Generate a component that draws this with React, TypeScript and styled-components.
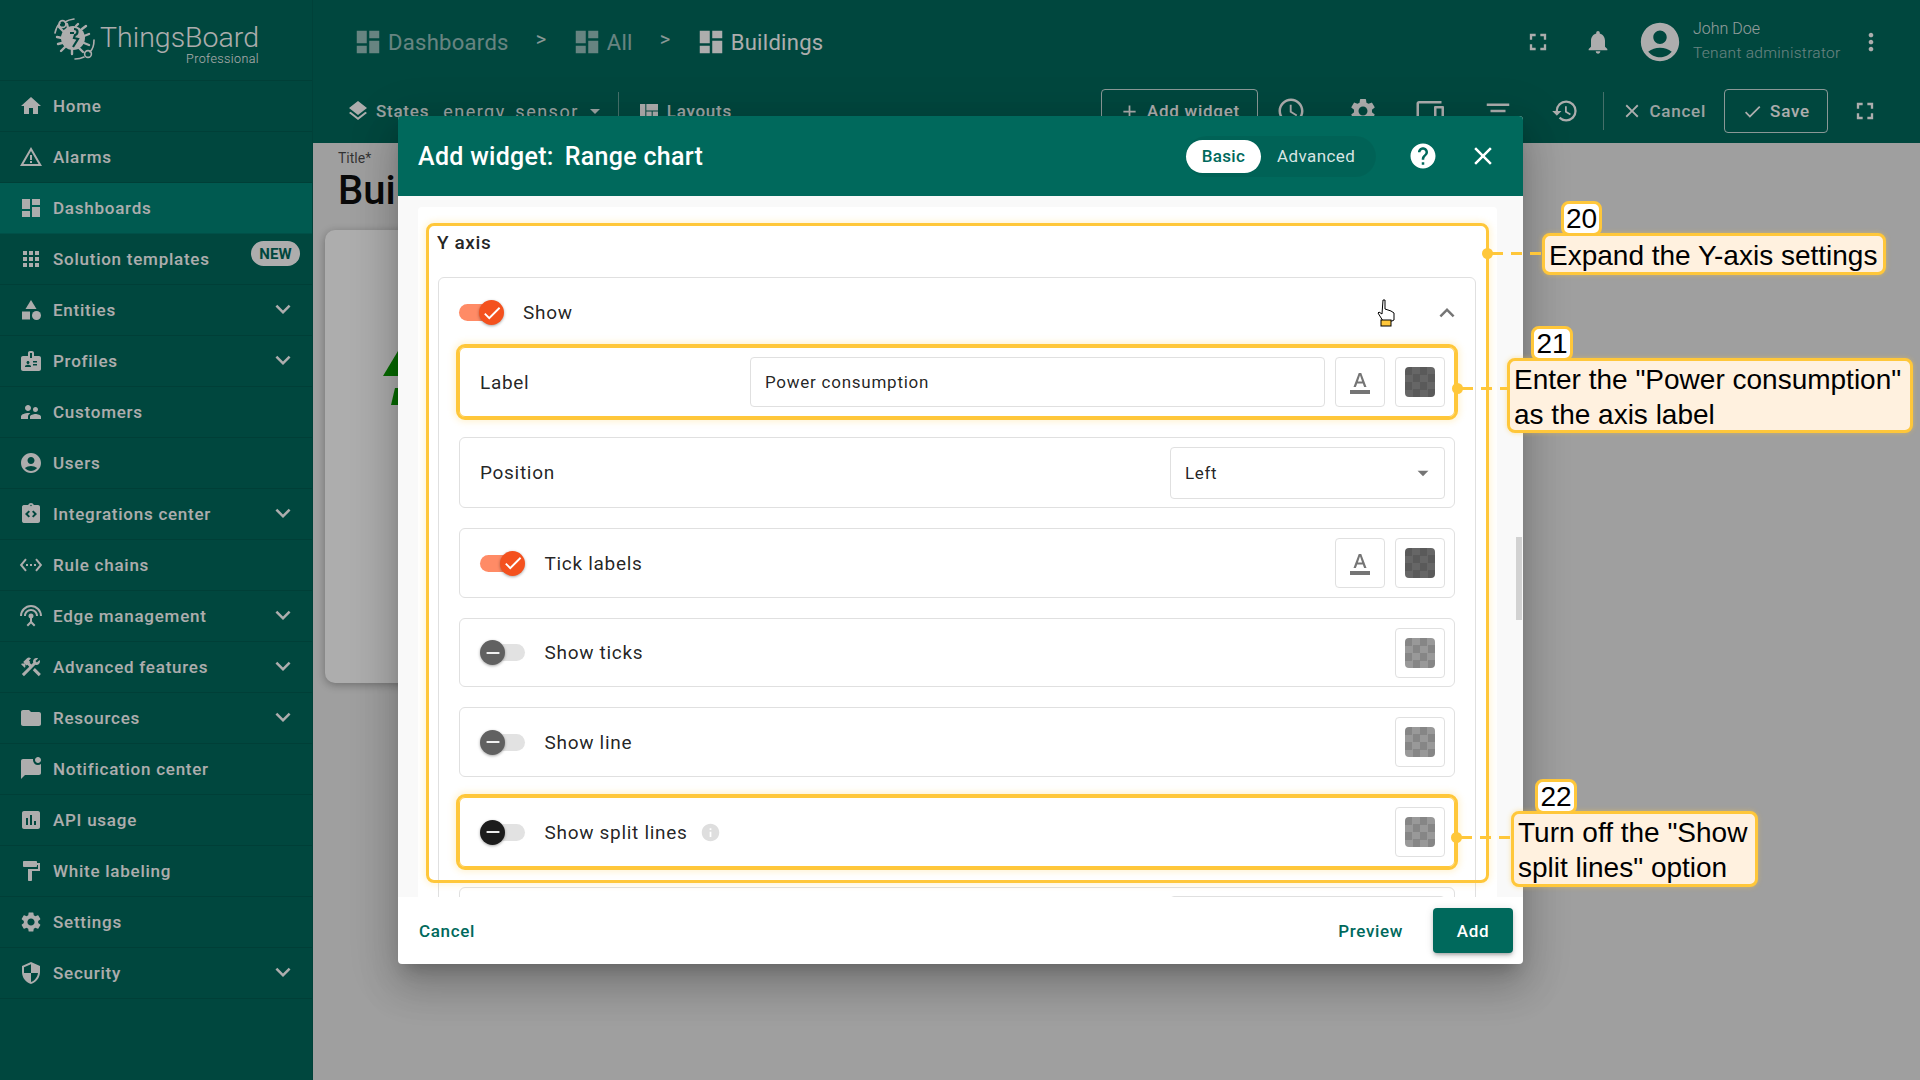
import React from 'react';
import styled, { createGlobalStyle } from 'styled-components';
import {
  MdHome, MdWarningAmber, MdDashboard, MdApps, MdCategory, MdBadge, MdSupervisorAccount, MdAccountCircle,
  MdIntegrationInstructions, MdSettingsEthernet, MdSettingsInputAntenna, MdConstruction, MdFolder,
  MdMarkChatUnread, MdAssessment, MdFormatPaint, MdSettings, MdSecurity, MdExpandMore, MdExpandLess,
  MdLayers, MdFullscreen, MdNotifications, MdMoreVert, MdAdd, MdHistory, MdAccessTime, MdDevices,
  MdFilterList, MdClose, MdCheck, MdHelp, MdInfo, MdArrowDropDown, MdFormatColorText, MdRemove, MdViewQuilt,
} from 'react-icons/md';

const Global = createGlobalStyle`
  html, body { margin: 0; padding: 0; width: 1920px; height: 1080px; overflow: hidden; }
  body { font-family: Roboto, "Liberation Sans", sans-serif; background: #eaeaea; }
  * { box-sizing: border-box; }
`;

const Page = styled.div`
  position: relative; width: 1920px; height: 1080px; display: flex; overflow: hidden;
`;
const Sidebar = styled.aside`
  width: 313px; height: 1080px; flex: none; background: #00695c; color: #fff;
  border-right: 1px solid rgba(0,0,0,.08);
`;
const Brand = styled.div`
  height: 81px; display: flex; padding: 17px 0 0 53px; gap: 5px; border-bottom: 1px solid rgba(0,0,0,.1);
`;
const BrandText = styled.div`display: flex; flex-direction: column; align-items: flex-end; width: 157px; padding-top: 6px;`;
const BrandName = styled.div`font-size: 28.5px; font-weight: 300; line-height: 29px;`;
const BrandSub = styled.div`font-size: 12.5px; font-weight: 300; line-height: 14px; letter-spacing: .4px;`;
const NavItem = styled.div<{ $active?: boolean }>`
  position: relative; height: 51px; display: flex; align-items: center; padding-left: 19px;
  background: ${p => (p.$active ? '#008577' : 'transparent')};
  border-bottom: 1px solid rgba(0,0,0,.1);
  font-size: 17px; font-weight: 500; letter-spacing: .75px;
  svg.main { width: 24px; height: 24px; margin-right: 10px; flex: none; }
`;
const Chevron = styled(MdExpandMore)`
  position: absolute; right: 14px; top: 9px; width: 30px; height: 30px;
`;
const NewBadge = styled.span`
  position: absolute; left: 251px; top: 7px; width: 49px; height: 25px; border-radius: 13px;
  background: #fff; color: #00695c; font-size: 15px; font-weight: 700; letter-spacing: .2px;
  display: flex; align-items: center; justify-content: center;
`;

const Main = styled.main`flex: 1; display: flex; flex-direction: column; min-width: 0;`;
const TopBar = styled.header`background: #00695c; color: #fff; height: 143px; flex: none;`;
const TopRow = styled.div`
  height: 84px; display: flex; align-items: center; padding: 0 35px 0 40px;
`;
const Crumb = styled.div<{ $dim?: boolean }>`
  display: flex; align-items: center; gap: 5px; font-size: 22px; letter-spacing: .3px;
  opacity: ${p => (p.$dim ? 0.6 : 1)};
  svg { width: 30px; height: 30px; }
`;
const CrumbSep = styled.span`opacity: .8; font-size: 20px; margin: -6px 25.5px 0 27px;`;
const Spacer = styled.div`flex: 1;`;
const BarIcon = styled.span<{ $mr?: number; $size?: number }>`
  display: inline-flex; margin-right: ${p => p.$mr ?? 0}px;
  svg { width: ${p => p.$size ?? 28}px; height: ${p => p.$size ?? 28}px; display: block; }
`;
const UserBlock = styled.div`display: flex; flex-direction: column; width: 164px; margin-left: 10px; margin-top: -3px; font-weight: 300;`;
const UserName = styled.div`font-size: 16px; line-height: 20px; opacity: .85; margin-bottom: 4px;`;
const UserRole = styled.div`font-size: 15.5px; line-height: 20px; opacity: .6; letter-spacing: .3px;`;
const ToolRow = styled.div`
  height: 54px; display: flex; align-items: center; padding: 0 41px 0 33px; font-size: 17px; font-weight: 500; letter-spacing: .75px;
`;
const ToolText = styled.span`
  display: inline-flex; align-items: center; opacity: .9; white-space: nowrap;
  svg { margin-left: 4px; }
`;
const StateName = styled.span`margin-left: 14px; font-size: 18px; font-weight: 400; letter-spacing: 1.5px;`;
const VSep = styled.span<{ $ml?: number; $mr: number }>`
  width: 1px; height: 38px; background: rgba(255,255,255,.4);
  margin-left: ${p => p.$ml ?? 0}px; margin-right: ${p => p.$mr}px;
`;
const OutlineBtn = styled.div<{ $w: number; $ml?: number; $mr?: number }>`
  width: ${p => p.$w}px; height: 44px; border: 1px solid rgba(255,255,255,.8); border-radius: 4px;
  display: flex; align-items: center; justify-content: center; gap: 7px;
  margin-left: ${p => p.$ml ?? 0}px; margin-right: ${p => p.$mr ?? 0}px;
  svg { width: 21px; height: 21px; }
`;
const Content = styled.section`flex: 1; background: #eaeaea; padding: 6px 0 0 12px; overflow: hidden;`;
const PageLabel = styled.div`font-size: 14px; color: rgba(0,0,0,.7); line-height: 18px; padding-left: 13px;`;
const PageTitle = styled.div`font-size: 40px; font-weight: 500; color: #101010; line-height: 48px; padding-left: 13px; margin-bottom: 15px;`;
const WidgetCard = styled.div`
  width: 900px; height: 453px; background: #fff; border-radius: 10px; padding: 121px 0 0 58px;
  box-shadow: 0 2px 8px rgba(0,0,0,.3);
`;

const Scrim = styled.div`position: absolute; inset: 0; background: rgba(0,0,0,.32);`;
const Dialog = styled.div`
  position: absolute; left: 398px; top: 116px; width: 1125px; height: 848px; background: #fff; border-radius: 4px;
  display: flex; flex-direction: column; overflow: hidden;
  box-shadow: 0 11px 15px -7px rgba(0,0,0,.2), 0 24px 38px 3px rgba(0,0,0,.14), 0 9px 46px 8px rgba(0,0,0,.12);
`;
const DialogHead = styled.div`
  height: 80px; flex: none; background: #00695c; color: #fff; display: flex; align-items: center; padding: 0 25px 0 20px;
`;
const DialogTitle = styled.div`font-size: 25px; font-weight: 500; letter-spacing: .3px; display: flex; gap: 11px; white-space: nowrap;`;
const ModeGroup = styled.div`
  height: 41px; width: 190px; border-radius: 21px; background: rgba(0,0,0,.06); display: flex; align-items: center;
  font-size: 17px; margin-right: 32px;
`;
const ModeOn = styled.div`
  width: 75px; height: 33px; border-radius: 17px; background: #fff; color: #00695c; font-weight: 500;
  display: flex; align-items: center; justify-content: center; letter-spacing: .3px;
`;
const ModeOff = styled.div`margin-left: 16px; color: rgba(255,255,255,.85); letter-spacing: .4px;`;
const HeadIcon = styled.span<{ $ml?: number }>`
  display: inline-flex; margin-left: ${p => p.$ml ?? 0}px;
  svg { width: 30px; height: 30px; display: block; }
`;
const Scroll = styled.div`
  position: relative; height: 701px; flex: none; overflow: hidden; background: #f9f9f9; padding: 11px 26px 0 20px;
`;
const ScrollThumb = styled.div`
  position: absolute; right: 1px; top: 341px; width: 6px; height: 83px; background: #d2d2d2;
`;
const Card = styled.div`
  position: relative; background: #fff; border-radius: 4px; padding: 0 21px 0 20px; height: 760px;
`;
const CardTitle = styled.div`
  height: 70px; display: flex; align-items: center; font-size: 19px; font-weight: 500; letter-spacing: .6px; color: rgba(0,0,0,.87); margin-left: -1px;
`;
const Section = styled.div`
  border: 1px solid #e0e0e0; border-radius: 6px; padding: 0 20px; height: 800px;
`;
const SectionHead = styled.div`
  height: 69px; display: flex; align-items: center; font-size: 19px; letter-spacing: .7px; color: rgba(0,0,0,.87); gap: 19px;
  svg.up { width: 30px; height: 30px; color: #757575; margin-left: auto; margin-right: -7px; }
`;
const Rows = styled.div`display: flex; flex-direction: column; gap: 20px;`;
const Row = styled.div<{ $hl?: boolean; $h?: number }>`
  position: relative; height: ${p => p.$h ?? 70}px; flex: none; border: 1px solid ${p => (p.$hl ? '#ffc73a' : '#e0e0e0')}; border-radius: 6px;
  display: flex; align-items: center; gap: 10px; padding: 0 9px 0 20px; font-size: 19px; color: rgba(0,0,0,.87); letter-spacing: .7px;
  ${p => p.$hl && 'outline: 3px solid #ffc73a; box-shadow: 0 0 6px 5px rgba(255,199,58,.22);'}
`;
const RowLabel = styled.span<{ $w?: number }>`
  ${p => (p.$w ? `width: ${p.$w}px;` : '')} flex: none;
`;
const ToggleLabel = styled.span`margin-left: 9.5px; display: inline-flex; align-items: center; gap: 12px;`;
const Grow = styled.div`flex: 1;`;
const Track = styled.span<{ $on?: boolean }>`
  position: relative; display: inline-block; width: 45px; height: 25px; flex: none;
  &::before {
    content: ''; position: absolute; top: 4px; height: 17px; border-radius: 9px;
    ${p => (p.$on ? 'left: 0; width: 36px; background: #ff8b66;' : 'left: 9px; width: 36px; background: #e2e2e2;')}
  }
`;
const Thumb = styled.span<{ $color: string; $on?: boolean }>`
  position: absolute; top: 0; ${p => (p.$on ? 'right: 0;' : 'left: 0;')} width: 25px; height: 25px; border-radius: 50%;
  background: ${p => p.$color}; color: #fff; display: flex; align-items: center; justify-content: center;
  box-shadow: 0 1px 3px rgba(0,0,0,.35);
  svg { width: 22px; height: 22px; }
`;
const TextField = styled.div`
  flex: 1; height: 50px; border: 1px solid #e0e0e0; border-radius: 4px; display: flex; align-items: center;
  padding-left: 14px; font-size: 17px; letter-spacing: .75px;
`;
const SelectField = styled.div`
  width: 275px; height: 52px; margin-left: auto; border: 1px solid #e0e0e0; border-radius: 4px; display: flex; align-items: center;
  justify-content: space-between; padding: 0 8px 0 14px; font-size: 17px; letter-spacing: .65px;
  svg { width: 26px; height: 26px; color: #757575; }
`;
const SquareBtn = styled.div`
  width: 50px; height: 50px; flex: none; border: 1px solid #e0e0e0; border-radius: 4px; display: flex; align-items: center; justify-content: center;
  svg { width: 24px; height: 24px; color: #757575; }
`;
const Swatch = styled.div<{ $dark?: boolean }>`
  width: 30px; height: 30px; border-radius: 4px;
  background: repeating-conic-gradient(${p => (p.$dark ? '#666 0 25%, #5a5a5a 0 50%' : '#999 0 25%, #868686 0 50%')}) 0 0 / 15px 15px;
`;
const InfoDot = styled(MdInfo)`width: 21px; height: 21px; color: #dedede;`;
const AxisHighlight = styled.div`
  position: absolute; left: 8px; top: 16px; width: 1063px; height: 660px; border: 3px solid #ffc73a; border-radius: 8px;
  pointer-events: none; box-shadow: 0 0 6px 2px rgba(255,199,58,.2);
`;
const Footer = styled.div`
  flex: 1; display: flex; align-items: center; padding: 0 10px 0 21px; font-size: 17px; font-weight: 500; color: #00695c; letter-spacing: .65px;
`;
const PreviewBtn = styled.span`margin-right: 30px;`;
const AddBtn = styled.div`
  width: 80px; height: 45px; border-radius: 4px; background: #00695c; color: #fff; display: flex; align-items: center; justify-content: center;
  box-shadow: 0 3px 3px -2px rgba(0,0,0,.2), 0 3px 4px rgba(0,0,0,.14), 0 1px 8px rgba(0,0,0,.12);
`;
const Cursor = styled.svg`position: absolute; left: 1376px; top: 299px; width: 20px; height: 28px;`;

const NoteBox = styled.div<{ $x: number; $y: number; $w: number; $h: number }>`
  position: absolute; left: ${p => p.$x}px; top: ${p => p.$y}px; width: ${p => p.$w}px; height: ${p => p.$h}px;
  background: #fff1df; border: 3px solid #ffc73a; border-radius: 8px; color: #000;
  font-family: "Liberation Sans", Arial, sans-serif; font-size: 28px; line-height: 35px; padding: 2px 0 0 4px; white-space: pre;
  display: flex; align-items: center; box-shadow: 0 0 5px rgba(255,199,58,.45);
`;
const NoteNum = styled.div<{ $x: number; $y: number; $w: number }>`
  position: absolute; left: ${p => p.$x}px; top: ${p => p.$y}px; width: ${p => p.$w}px; height: 35px;
  background: #fff; border: 3px solid #ffc73a; border-radius: 8px; color: #000; padding-top: 1px;
  font-family: "Liberation Sans", Arial, sans-serif; font-size: 28px; display: flex; align-items: center; justify-content: center;
`;
const Dash = styled.div<{ $x: number; $y: number; $w: number }>`
  position: absolute; left: ${p => p.$x}px; top: ${p => p.$y - 1.5}px; width: ${p => p.$w}px; height: 3px;
  background: repeating-linear-gradient(90deg, #ffc73a 0 11px, transparent 11px 19px);
`;
const Dot = styled.div<{ $x: number; $y: number }>`
  position: absolute; left: ${p => p.$x - 5.5}px; top: ${p => p.$y - 5.5}px; width: 11px; height: 11px; border-radius: 50%; background: #ffc73a;
`;

const Logo = () => (
  <svg width="44" height="44" viewBox="0 0 44 44" fill="none" style={{ flex: 'none' }}>
    <g stroke="#fff" strokeWidth="1.6" strokeLinecap="round">
      <path d="M2 16 C3 11 5 8 7 6" />
      <path d="M12 5 C15 3 17 2.5 21 2" />
      <circle cx="9.5" cy="7" r="3.4" />
      <path d="M41 23 C41 29 39 33 37 35" />
      <path d="M31 40 C28 41.5 25 42 22 42" />
      <circle cx="35" cy="37" r="3.4" />
      <path d="M9 21 L4 20 M10 14 L6 10 M15 11 L14 7 M23 9 L25 7 M29 12 L33 9 M31 19 L36 17 M31 26 L36 28 M26 31 L30 35 M19 33 L19 37 M12 30 L8 34 M9 26 L5 27" strokeWidth="2.4" />
    </g>
    <circle cx="20" cy="21" r="12" fill="#fff" />
    <path d="M21 12 C26 12 25 17 22 18 L21 21 L25 22 L20 30 M17 16 L21 16" stroke="#00695c" strokeWidth="2.2" fill="none" />
  </svg>
);

const nav: { label: string; Icon: React.ComponentType<{ className?: string }>; more?: boolean; active?: boolean; badge?: boolean }[] = [
  { label: 'Home', Icon: MdHome },
  { label: 'Alarms', Icon: MdWarningAmber },
  { label: 'Dashboards', Icon: MdDashboard, active: true },
  { label: 'Solution templates', Icon: MdApps, badge: true },
  { label: 'Entities', Icon: MdCategory, more: true },
  { label: 'Profiles', Icon: MdBadge, more: true },
  { label: 'Customers', Icon: MdSupervisorAccount },
  { label: 'Users', Icon: MdAccountCircle },
  { label: 'Integrations center', Icon: MdIntegrationInstructions, more: true },
  { label: 'Rule chains', Icon: MdSettingsEthernet },
  { label: 'Edge management', Icon: MdSettingsInputAntenna, more: true },
  { label: 'Advanced features', Icon: MdConstruction, more: true },
  { label: 'Resources', Icon: MdFolder, more: true },
  { label: 'Notification center', Icon: MdMarkChatUnread },
  { label: 'API usage', Icon: MdAssessment },
  { label: 'White labeling', Icon: MdFormatPaint },
  { label: 'Settings', Icon: MdSettings },
  { label: 'Security', Icon: MdSecurity, more: true },
];

const Toggle = ({ on, color }: { on?: boolean; color: string }) => (
  <Track $on={on}>
    <Thumb $on={on} $color={color}>{on ? <MdCheck /> : <MdRemove />}</Thumb>
  </Track>
);

export default function App() {
  return (
    <Page>
      <Global />
      <Sidebar>
        <Brand>
          <Logo />
          <BrandText>
            <BrandName>ThingsBoard</BrandName>
            <BrandSub>Professional</BrandSub>
          </BrandText>
        </Brand>
        {nav.map(({ label, Icon, more, active, badge }) => (
          <NavItem key={label} $active={active}>
            <Icon className="main" />
            {label}
            {more && <Chevron />}
            {badge && <NewBadge>NEW</NewBadge>}
          </NavItem>
        ))}
      </Sidebar>
      <Main>
        <TopBar>
          <TopRow>
            <Crumb $dim><MdDashboard />Dashboards</Crumb>
            <CrumbSep>&gt;</CrumbSep>
            <Crumb $dim><MdDashboard />All</Crumb>
            <CrumbSep>&gt;</CrumbSep>
            <Crumb><MdDashboard />Buildings</Crumb>
            <Spacer />
            <BarIcon $mr={32}><MdFullscreen /></BarIcon>
            <BarIcon $mr={25}><MdNotifications /></BarIcon>
            <BarIcon $size={46}><MdAccountCircle /></BarIcon>
            <UserBlock>
              <UserName>John Doe</UserName>
              <UserRole>Tenant administrator</UserRole>
            </UserBlock>
            <BarIcon><MdMoreVert /></BarIcon>
          </TopRow>
          <ToolRow>
            <BarIcon $mr={6} $size={24}><MdLayers /></BarIcon>
            <ToolText>States<StateName>energy_sensor</StateName><MdArrowDropDown size={24} /></ToolText>
            <VSep $ml={11} $mr={18} />
            <BarIcon $mr={6} $size={24}><MdViewQuilt /></BarIcon>
            <ToolText>Layouts</ToolText>
            <Spacer />
            <OutlineBtn $w={157} $mr={18}><MdAdd />Add widget</OutlineBtn>
            <BarIcon $mr={42} $size={30}><MdAccessTime /></BarIcon>
            <BarIcon $mr={36} $size={30}><MdSettings /></BarIcon>
            <BarIcon $mr={39.5} $size={30}><MdDevices /></BarIcon>
            <BarIcon $mr={38} $size={30}><MdFilterList /></BarIcon>
            <BarIcon $mr={24} $size={28}><MdHistory /></BarIcon>
            <VSep $mr={17} />
            <BarIcon $mr={6} $size={22}><MdClose /></BarIcon>
            <ToolText>Cancel</ToolText>
            <OutlineBtn $w={104} $ml={18} $mr={23}><MdCheck />Save</OutlineBtn>
            <BarIcon $size={28}><MdFullscreen /></BarIcon>
          </ToolRow>
        </TopBar>
        <Content>
          <PageLabel>Title*</PageLabel>
          <PageTitle>Buildings</PageTitle>
          <WidgetCard>
            <svg width="40" height="60" viewBox="0 0 40 60">
              <polygon points="0,25 15,0 30,25" fill="#0b9e00" />
              <polygon points="12,37 18,37 18,54 8,54" fill="#0b9e00" />
            </svg>
          </WidgetCard>
        </Content>
      </Main>

      <Scrim />

      <Dialog>
        <DialogHead>
          <DialogTitle><span>Add widget:</span><span>Range chart</span></DialogTitle>
          <Spacer />
          <ModeGroup>
            <ModeOn>Basic</ModeOn>
            <ModeOff>Advanced</ModeOff>
          </ModeGroup>
          <HeadIcon><MdHelp /></HeadIcon>
          <HeadIcon $ml={30}><MdClose /></HeadIcon>
        </DialogHead>
        <Scroll>
          <Card>
            <CardTitle>Y axis</CardTitle>
            <Section>
              <SectionHead>
                <Toggle on color="#f4511e" />
                Show
                <MdExpandLess className="up" />
              </SectionHead>
              <Rows>
                <Row $hl>
                  <RowLabel $w={260}>Label</RowLabel>
                  <TextField>Power consumption</TextField>
                  <SquareBtn><MdFormatColorText /></SquareBtn>
                  <SquareBtn><Swatch $dark /></SquareBtn>
                </Row>
                <Row $h={71}>
                  <RowLabel>Position</RowLabel>
                  <SelectField>Left<MdArrowDropDown /></SelectField>
                </Row>
                <Row>
                  <Toggle on color="#f4511e" />
                  <ToggleLabel>Tick labels</ToggleLabel>
                  <Grow />
                  <SquareBtn><MdFormatColorText /></SquareBtn>
                  <SquareBtn><Swatch $dark /></SquareBtn>
                </Row>
                <Row $h={69}>
                  <Toggle color="#616161" />
                  <ToggleLabel>Show ticks</ToggleLabel>
                  <Grow />
                  <SquareBtn><Swatch /></SquareBtn>
                </Row>
                <Row>
                  <Toggle color="#616161" />
                  <ToggleLabel>Show line</ToggleLabel>
                  <Grow />
                  <SquareBtn><Swatch /></SquareBtn>
                </Row>
                <Row $hl>
                  <Toggle color="#1c1c1c" />
                  <ToggleLabel>Show split lines<InfoDot /></ToggleLabel>
                  <Grow />
                  <SquareBtn><Swatch /></SquareBtn>
                </Row>
                <Row>
                  <SelectField />
                </Row>
              </Rows>
            </Section>
            <AxisHighlight />
          </Card>
          <ScrollThumb />
        </Scroll>
        <Footer>
          <span>Cancel</span>
          <Spacer />
          <PreviewBtn>Preview</PreviewBtn>
          <AddBtn>Add</AddBtn>
        </Footer>
      </Dialog>

      <Cursor viewBox="0 0 20 28">
        <path d="M7 1 h2 v9 l6 2 l3 2 v7 l-2 1 h-9 l-5 -8 l1 -1 l3 2 z" fill="#fff" stroke="#000" strokeWidth="1" />
        <rect x="5" y="21" width="10" height="6" fill="#ffc73a" stroke="#000" strokeWidth="1" />
      </Cursor>

      <Dash $x={1492} $y={253} $w={50} />
      <Dot $x={1487} $y={253} />
      <NoteBox $x={1542} $y={233} $w={344} $h={42}>Expand the Y-axis settings</NoteBox>
      <NoteNum $x={1561} $y={201} $w={41}>20</NoteNum>

      <Dash $x={1462} $y={388} $w={45} />
      <Dot $x={1457} $y={388} />
      <NoteBox $x={1507} $y={358} $w={406} $h={75}>{'Enter the "Power consumption"\nas the axis label'}</NoteBox>
      <NoteNum $x={1531} $y={326} $w={42}>21</NoteNum>

      <Dash $x={1461} $y={837} $w={50} />
      <Dot $x={1456} $y={837} />
      <NoteBox $x={1511} $y={811} $w={247} $h={76}>{'Turn off the "Show\nsplit lines" option'}</NoteBox>
      <NoteNum $x={1535} $y={779} $w={42}>22</NoteNum>
    </Page>
  );
}
